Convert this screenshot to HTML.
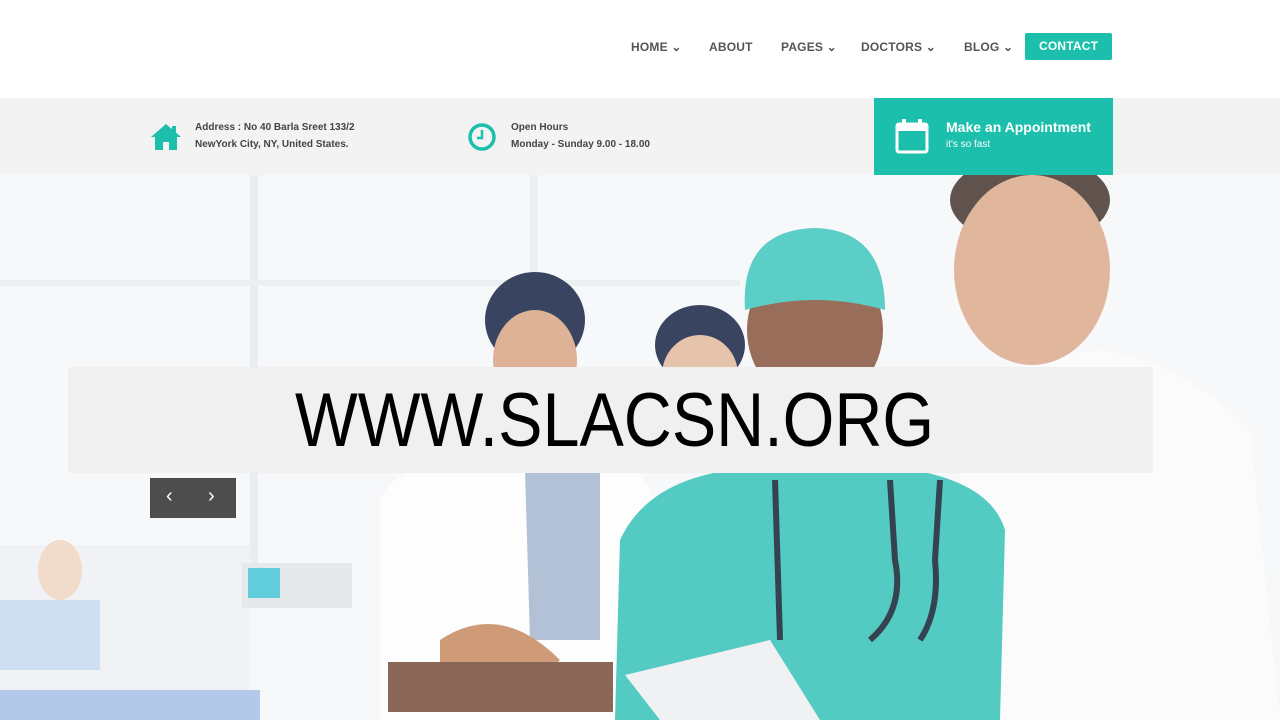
<!DOCTYPE html>
<html><head><meta charset="utf-8">
<style>
*{margin:0;padding:0;box-sizing:border-box}
body{width:1280px;height:720px;overflow:hidden;background:#fff;font-family:"Liberation Sans",sans-serif;position:relative}
.nav{position:absolute;top:33px;height:27px;display:flex;align-items:center;font-size:12px;font-weight:bold;color:#555;letter-spacing:.2px}
.nav span{position:absolute;white-space:nowrap}
.contact{background:#1bbfab;color:#fff;height:27px;line-height:27px;padding:0 14px;border-radius:2px}
.bar{position:absolute;top:98px;left:0;width:1280px;height:77px;background:#f3f3f3}
.info{position:absolute;font-size:10px;color:#444;line-height:17px;font-weight:bold}
.appt{position:absolute;left:874px;top:98px;width:239px;height:77px;background:#1bbfab;color:#fff}
.hero{position:absolute;top:175px;left:0;width:1280px;height:545px;overflow:hidden}
.banner{position:absolute;left:68px;top:367px;width:1085px;height:106px;background:#f0f0f0}
.banner div{position:absolute;left:227px;top:14px;font-size:76px;color:#000;white-space:nowrap;transform:scaleX(.875);transform-origin:left top;line-height:80px}
.arrows{position:absolute;left:150px;top:478px;width:86px;height:40px;background:#4d4d4d;color:#fff;font-size:20px}
</style></head><body>
<div class="nav">
<span style="left:631px">HOME ⌄</span>
<span style="left:709px">ABOUT</span>
<span style="left:781px">PAGES ⌄</span>
<span style="left:861px">DOCTORS ⌄</span>
<span style="left:964px">BLOG ⌄</span>
<span class="contact" style="left:1025px">CONTACT</span>
</div>
<div class="bar"></div>
<svg style="position:absolute;left:150px;top:123px" width="32" height="28" viewBox="0 0 32 28"><path d="M16 1 L1 14 L5 14 L5 27 L13 27 L13 19 L19 19 L19 27 L27 27 L27 14 L31 14 Z" fill="#1bbfab"/><rect x="22" y="3" width="4" height="8" fill="#1bbfab"/></svg>
<div class="info" style="left:195px;top:119px">Address : No 40 Barla Sreet 133/2<br>NewYork City, NY, United States.</div>
<svg style="position:absolute;left:467px;top:122px" width="30" height="30" viewBox="0 0 30 30"><circle cx="15" cy="15" r="12" fill="none" stroke="#1bbfab" stroke-width="3.5"/><path d="M15 8 V16 H10" fill="none" stroke="#1bbfab" stroke-width="2.5"/></svg>
<div class="info" style="left:511px;top:119px">Open Hours<br>Monday - Sunday 9.00 - 18.00</div>
<div class="appt">
<svg style="position:absolute;left:21px;top:20px" width="34" height="36" viewBox="0 0 34 36"><rect x="2" y="6" width="30" height="28" rx="2" fill="none" stroke="#fff" stroke-width="3"/><rect x="2" y="6" width="30" height="7" fill="#fff"/><rect x="7" y="1" width="4" height="8" fill="#fff"/><rect x="23" y="1" width="4" height="8" fill="#fff"/></svg>
<div style="position:absolute;left:72px;top:21px;font-size:14px;font-weight:bold">Make an Appointment</div>
<div style="position:absolute;left:72px;top:41px;font-size:10px">it's so fast</div>
</div>
<div class="hero">
<svg width="1280" height="545" viewBox="0 175 1280 545">
<rect x="0" y="175" width="1280" height="545" fill="#f6f8fa"/>
<rect x="250" y="175" width="8" height="400" fill="#e6ebef"/>
<rect x="530" y="175" width="8" height="300" fill="#eaeef2"/>
<rect x="0" y="280" width="740" height="6" fill="#e8edf1"/>
<rect x="0" y="545" width="250" height="175" fill="#eef1f5"/>
<rect x="0" y="690" width="260" height="30" fill="#aac2e8"/>
<ellipse cx="60" cy="570" rx="22" ry="30" fill="#f0d8c4"/>
<rect x="0" y="600" width="100" height="70" fill="#c6dbef"/>
<rect x="242" y="563" width="110" height="45" fill="#e2e6ea"/>
<rect x="248" y="568" width="32" height="30" fill="#4cc6d6"/>
<path d="M380 720 L380 500 Q400 460 470 455 L610 455 Q650 470 660 520 L650 720 Z" fill="#fdfdfd"/>
<path d="M525 470 L600 470 L600 640 L530 640 Z" fill="#a9b9d2"/>
<ellipse cx="535" cy="320" rx="50" ry="48" fill="#1e2b4a"/>
<ellipse cx="535" cy="360" rx="42" ry="50" fill="#d9a888"/>
<ellipse cx="700" cy="345" rx="45" ry="40" fill="#1e2b4a"/>
<ellipse cx="700" cy="375" rx="38" ry="40" fill="#e2bca0"/>
<path d="M440 640 Q500 600 560 660 L540 680 Q480 660 440 670 Z" fill="#c88c66"/>
<rect x="388" y="662" width="225" height="50" fill="#7a5340"/>
<path d="M960 720 L960 420 Q1000 360 1100 350 Q1180 360 1250 430 L1280 720 Z" fill="#fbfbfc"/>
<ellipse cx="1030" cy="200" rx="80" ry="45" fill="#4a3c36"/>
<ellipse cx="1032" cy="270" rx="78" ry="95" fill="#dcae90"/>
<path d="M615 720 L620 540 Q650 475 750 468 L900 468 Q990 480 1005 530 L1000 720 Z" fill="#3cc3ba"/>
<ellipse cx="815" cy="330" rx="68" ry="75" fill="#8a5a44"/>
<path d="M745 310 Q740 230 815 228 Q885 230 885 310 Q815 290 745 310 Z" fill="#45c9c0"/>
<path d="M890 480 L895 560 Q905 610 870 640 M940 480 L935 560 Q940 610 920 640" fill="none" stroke="#1a2a3a" stroke-width="6"/>
<path d="M775 480 L780 640" stroke="#1a2a3a" stroke-width="6"/>
<path d="M625 675 L770 640 L820 720 L660 720 Z" fill="#eef0f2"/>
</svg>
<div style="position:absolute;left:0;top:0;width:1280px;height:545px;background:rgba(255,255,255,.12)"></div>
</div>
<div class="banner"><div>WWW.SLACSN.ORG</div></div>
<div class="arrows"><span style="position:absolute;left:16px;top:7px">‹</span><span style="position:absolute;left:58px;top:7px">›</span></div>
</body></html>
